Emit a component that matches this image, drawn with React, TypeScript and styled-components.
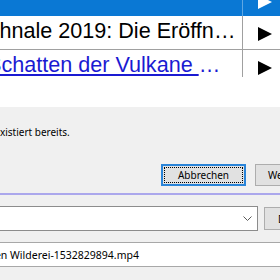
import React from "react";
import styled, { createGlobalStyle } from "styled-components";

const GlobalStyle = createGlobalStyle`
  html, body {
    margin: 0;
    padding: 0;
    background: #ffffff;
  }
  body {
    width: 280px;
    height: 280px;
    overflow: hidden;
  }
`;

interface Episode {
  title: string;
  link?: boolean;
}

const EPISODES: Episode[] = [
  { title: "Wachnale 2019: Die Eröffnung der Ausstellung" },
  { title: "Im Schatten der Vulkane Mittelamerikas", link: true },
];

const App = () => {
  return (
    <>
      <GlobalStyle />
      <Page>
        <ListClip>
          <List>
            <Row $header>
              <TitleCell $header />
              <ArrowCell>
                <Play $light />
              </ArrowCell>
            </Row>
            {EPISODES.map((ep) => (
              <Row key={ep.title}>
                <TitleCell>
                  <Title $link={ep.link}>{ep.title}</Title>
                </TitleCell>
                <ArrowCell>
                  <Play />
                </ArrowCell>
              </Row>
            ))}
          </List>
        </ListClip>

        <Backdrop />

        <MessageBox>
          <Message>Die Datei existiert bereits.</Message>
          <ButtonRow>
            <DialogButton $focused>Abbrechen</DialogButton>
            <DialogButton>Weiter speichern</DialogButton>
          </ButtonRow>
        </MessageBox>

        <WindowEdge />

        <SaveDialog>
          <FolderRow>
            <ComboBox>
              <svg width="9" height="5" viewBox="0 0 9 5">
                <polyline
                  points="0.5,0.5 4.5,4.5 8.5,0.5"
                  fill="none"
                  stroke="#5a5a5a"
                  strokeWidth="1"
                />
              </svg>
            </ComboBox>
            <SideButton>Durchsuchen…</SideButton>
          </FolderRow>
          <FileName
            readOnly
            value="Im Kampf gegen Wilderei-1532829894.mp4"
          />
        </SaveDialog>
      </Page>
    </>
  );
};

export default App;

const Page = styled.div`
  width: 280px;
  height: 280px;
  overflow: hidden;
  display: flex;
  flex-direction: column;
  background: #ffffff;
`;

const ListClip = styled.div`
  flex: none;
  height: 77px;
  overflow: hidden;
`;

const List = styled.div`
  margin: -14px 0 0 -50px;
  width: 400px;
  font-family: "Liberation Sans", Arial, sans-serif;
  font-size: 21.6px;
`;

const Row = styled.div<{ $header?: boolean }>`
  display: grid;
  grid-template-columns: 293px 44px;
  height: ${(p) => (p.$header ? "30px" : "33px")};
  background: ${(p) => (p.$header ? "#0a78d4" : "#ffffff")};
  border-bottom: ${(p) => (p.$header ? "none" : "1px solid #a0a0a0")};
`;

const TitleCell = styled.div<{ $header?: boolean }>`
  box-sizing: border-box;
  padding: 0 4px 0 7px;
  border-right: 1px solid
    ${(p) => (p.$header ? "rgba(255, 255, 255, 0.35)" : "#a0a0a0")};
  overflow: hidden;
`;

const Title = styled.div<{ $link?: boolean }>`
  line-height: 29px;
  white-space: nowrap;
  overflow: hidden;
  text-overflow: ellipsis;
  color: ${(p) => (p.$link ? "#1a1ad2" : "#000000")};
  text-decoration: ${(p) => (p.$link ? "underline" : "none")};
`;

const ArrowCell = styled.div`
  display: flex;
  align-items: center;
  justify-content: center;
  padding-top: 2px;
`;

const Play = styled.span<{ $light?: boolean }>`
  width: 0;
  height: 0;
  border-top: 7px solid transparent;
  border-bottom: 7px solid transparent;
  border-left: 14px solid ${(p) => (p.$light ? "#ffffff" : "#000000")};
`;

const Backdrop = styled.div`
  flex: none;
  height: 30px;
  background: #ffffff;
`;

const MessageBox = styled.div`
  flex: none;
  height: 86px;
  box-sizing: border-box;
  padding-top: 18px;
  background: #f0f0f0;
  font-family: "Noto Sans", "Open Sans", sans-serif;
  font-size: 10px;
  color: #000000;
`;

const Message = styled.div`
  margin-left: -51px;
  line-height: 14px;
  white-space: nowrap;
`;

const ButtonRow = styled.div`
  display: flex;
  gap: 9px;
  margin-top: 25px;
  padding-left: 161px;
`;

const DialogButton = styled.button<{ $focused?: boolean }>`
  position: relative;
  flex: none;
  box-sizing: border-box;
  min-width: 85px;
  height: 22px;
  padding: 0 12px;
  background: #e1e1e1;
  border: ${(p) => (p.$focused ? "2px solid #2a84d8" : "1px solid #adadad")};
  font-family: inherit;
  font-size: 10px;
  color: #000000;
  white-space: nowrap;

  &::after {
    content: "";
    display: ${(p) => (p.$focused ? "block" : "none")};
    position: absolute;
    inset: 1px;
    border: 1px dotted #000000;
  }
`;

const WindowEdge = styled.div`
  flex: none;
  height: 2px;
  background: #aba7ec;
`;

const SaveDialog = styled.div`
  flex: 1;
  display: flex;
  flex-direction: column;
  gap: 11px;
  padding-top: 11px;
  background: #f0f0f0;
  font-family: "Noto Sans", "Open Sans", sans-serif;
  font-size: 10px;
`;

const FolderRow = styled.div`
  display: flex;
  align-items: center;
  gap: 6px;
  margin-left: -20px;
`;

const ComboBox = styled.div`
  flex: none;
  box-sizing: border-box;
  width: 278px;
  height: 25px;
  display: flex;
  align-items: center;
  justify-content: flex-end;
  padding-right: 5px;
  background: #ffffff;
  border: 1px solid #8c8c8c;
`;

const SideButton = styled.button`
  flex: none;
  box-sizing: border-box;
  height: 23px;
  padding: 0 13px;
  background: #e1e1e1;
  border: 1px solid #adadad;
  font-family: inherit;
  font-size: 10px;
  color: #000000;
  white-space: nowrap;
`;

const FileName = styled.input`
  box-sizing: border-box;
  width: 360px;
  height: 25px;
  margin-left: -78px;
  padding: 0 0 0 2px;
  background: #ffffff;
  border: 1px solid #a8a8a8;
  outline: none;
  font-family: inherit;
  font-size: 10.5px;
  color: #000000;
`;
